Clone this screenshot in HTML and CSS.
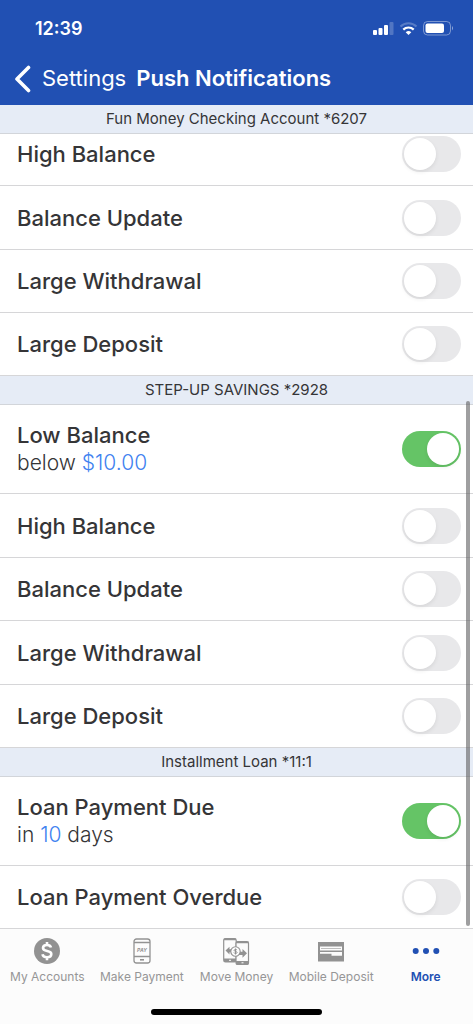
FILE: index.html
```html
<!DOCTYPE html>
<html lang="en">
<head>
<meta charset="utf-8">
<meta name="viewport" content="width=device-width, initial-scale=1">
<title>Push Notifications</title>
<link rel="stylesheet" href="styles.css">
</head>
<body>
<div class="app">
  <header class="top">
    <div class="status">
      <span class="time">12:39</span>
      <svg class="status-icons" width="82" height="16" viewBox="0 0 82 16" aria-hidden="true">
        <g fill="#fff">
          <rect x="1" y="10" width="4" height="5" rx="1"/>
          <rect x="6.500" y="8" width="4" height="7" rx="1"/>
          <rect x="12" y="5" width="4" height="10" rx="1"/>
          <rect x="17.500" y="2" width="4" height="13" rx="1" opacity=".22"/>
        </g>
        <g fill="none" stroke="#fff" stroke-width="2.200">
          <path d="M28.500 6.500a11.500 11.500 0 0 1 16 0" opacity=".25"/>
          <path d="M31.300 9.600a7.500 7.500 0 0 1 10.400 0"/>
        </g>
        <path d="M33.700 12.300a4 4 0 0 1 5.600 0L36.500 15z" fill="#fff"/>
        <rect x="51.500" y="1.500" width="27" height="13.500" rx="4" fill="none" stroke="#fff" opacity=".4"/>
        <rect x="53.500" y="3.500" width="18.500" height="9.500" rx="2" fill="#fff"/>
        <path d="M80 6q2 2 0 4.500z" fill="#fff" opacity=".5"/>
      </svg>
    </div>
    <div class="nav">
      <a class="back" href="#settings">
        <svg width="18" height="28" viewBox="0 0 18 28" aria-hidden="true"><path d="M14.500 2.500L3 14l11.500 11.500" fill="none" stroke="#fff" stroke-width="3.600" stroke-linecap="round" stroke-linejoin="round"/></svg>
        <span>Settings</span>
      </a>
      <h1 class="title">Push Notifications</h1>
    </div>
  </header>

  <main class="content">
    <section>
      <h2 class="group">Fun Money Checking Account *6207</h2>
      <ul class="rows scrolled">
        <li class="row"><label class="name" for="a1">High Balance</label><input class="switch" type="checkbox" role="switch" id="a1"></li>
        <li class="row"><label class="name" for="a2">Balance Update</label><input class="switch" type="checkbox" role="switch" id="a2"></li>
        <li class="row"><label class="name" for="a3">Large Withdrawal</label><input class="switch" type="checkbox" role="switch" id="a3"></li>
        <li class="row"><label class="name" for="a4">Large Deposit</label><input class="switch" type="checkbox" role="switch" id="a4"></li>
      </ul>
    </section>
    <section>
      <h2 class="group">STEP-UP SAVINGS *2928</h2>
      <ul class="rows">
        <li class="row tall"><div><label class="name" for="b1">Low Balance</label><p class="detail">below <a href="#amount">$10.00</a></p></div><input class="switch" type="checkbox" role="switch" id="b1" checked></li>
        <li class="row"><label class="name" for="b2">High Balance</label><input class="switch" type="checkbox" role="switch" id="b2"></li>
        <li class="row"><label class="name" for="b3">Balance Update</label><input class="switch" type="checkbox" role="switch" id="b3"></li>
        <li class="row"><label class="name" for="b4">Large Withdrawal</label><input class="switch" type="checkbox" role="switch" id="b4"></li>
        <li class="row"><label class="name" for="b5">Large Deposit</label><input class="switch" type="checkbox" role="switch" id="b5"></li>
      </ul>
    </section>
    <section>
      <h2 class="group">Installment Loan *11:1</h2>
      <ul class="rows">
        <li class="row tall"><div><label class="name" for="c1">Loan Payment Due</label><p class="detail">in <a href="#days">10</a> days</p></div><input class="switch" type="checkbox" role="switch" id="c1" checked></li>
        <li class="row"><label class="name" for="c2">Loan Payment Overdue</label><input class="switch" type="checkbox" role="switch" id="c2"></li>
      </ul>
    </section>
    <div class="scroll-thumb"></div>
  </main>

  <footer class="bottom">
    <nav class="tabs">
      <a class="tab" href="#accounts">
        <svg width="28" height="28" viewBox="0 0 28 28" aria-hidden="true"><circle cx="14" cy="14" r="13" fill="#929292"/><path d="M18 10.500C17.500 8.700 16 8 14 8c-2.300 0-4 1.100-4 3 0 4.300 8.300 1.700 8.300 6 0 2-1.900 3.200-4.300 3.200-2.500 0-4.200-1-4.500-3M14 5v3M14 20v3.200" fill="none" stroke="#fff" stroke-width="2.600"/></svg>
        <span>My Accounts</span>
      </a>
      <a class="tab" href="#payment">
        <svg width="28" height="28" viewBox="0 0 28 28" aria-hidden="true"><g fill="none" stroke="#929292" stroke-width="1.300"><rect x="6" y="2" width="16" height="24" rx="2.500"/><path d="M6 5.500h16M6 19.500h16"/><path d="M12 22.800h4" stroke-width="1.600"/></g><text x="14" y="14.500" text-anchor="middle" class="pay">PAY</text></svg>
        <span>Make Payment</span>
      </a>
      <a class="tab" href="#move">
        <svg width="28" height="28" viewBox="0 0 28 28" aria-hidden="true"><g fill="none" stroke="#929292" stroke-width="1.200"><rect x="1.700" y="1.500" width="12.500" height="23.500" rx="1.800"/><rect x="14" y="4.500" width="12.500" height="23" rx="1.800" fill="#fcfcfc"/></g><path d="M2 1.500h12v1.800H2zM2 21.500h12V25H2zM14 4.500h12.500v1.800H14zM14 24h12.500v3.500H14zM3.500 13.500l4-3.700v2.400h4v3h-4v2.400zM25 16.300L20.500 12v2.700h-4V18h4v2.700z" fill="#929292"/><circle cx="13.500" cy="14.500" r="4.700" fill="#fcfcfc" stroke="#929292" stroke-width="1.100"/><path d="M15 13.200c-.3-1-2.900-1-2.900.2 0 1.300 3 .7 3 2.100 0 1.300-3 1.300-3.200 0M13.500 11.500v6" fill="none" stroke="#929292"/><path d="M7 23.300h2M19.500 25.800h2" stroke="#fff"/></svg>
        <span>Move Money</span>
      </a>
      <a class="tab" href="#deposit">
        <svg width="28" height="28" viewBox="0 0 28 28" aria-hidden="true"><path d="M1 5h26v19.500H1z" fill="#929292"/><path d="M3 9.500h22v4H3zM3 15h22v3.700H14.500v-2H3z" fill="#fcfcfc"/><path d="M4 11.500h20" stroke="#929292" stroke-width=".6"/></svg>
        <span>Mobile Deposit</span>
      </a>
      <a class="tab active" href="#more" aria-current="page">
        <svg width="28" height="28" viewBox="0 0 28 28" aria-hidden="true"><g fill="#2150b3"><circle cx="3.700" cy="14" r="3"/><circle cx="14" cy="14" r="3"/><circle cx="24.300" cy="14" r="3"/></g></svg>
        <span>More</span>
      </a>
    </nav>
    <div class="home-bar"></div>
  </footer>
</div>
</body>
</html>
```
FILE: styles.css
```css
* { box-sizing: border-box; }
body, h1, h2, p, ul { margin: 0; padding: 0; }
body {
  background: #fcfcfc;
  color: #353537;
  font-family: Inter, "Liberation Sans", sans-serif;
}
a { color: inherit; text-decoration: none; }
.app { min-height: 100vh; display: flex; flex-direction: column; }

.top { background: #2150b3; color: #fff; padding: 16px 19px 12px 14px; }
.status { display: flex; justify-content: space-between; align-items: center; padding-left: 21px; height: 24px; }
.time { font-size: 18px; font-weight: 600; }
.status-icons { display: block; }
.nav { display: flex; align-items: center; gap: 10px; padding-top: 24px; }
.back { display: flex; align-items: center; gap: 10px; font-size: 22px; line-height: 29px; }
.title { font-size: 22px; line-height: 29px; font-weight: 600; }

.content { position: relative; background: #fff; }
.group {
  position: relative;
  z-index: 1;
  height: 29px;
  line-height: 28px;
  background: #e6ecf6;
  border-bottom: 1px solid #d2d5da;
  text-align: center;
  font-size: 15px;
  font-weight: 400;
}
.rows { list-style: none; }
.scrolled { margin-top: -11px; }
.row {
  display: flex;
  align-items: center;
  justify-content: space-between;
  min-height: 63px;
  padding: 0 12px 0 17px;
  border-bottom: 1px solid #d6d6d8;
}
.row:nth-child(even):not(:last-child) { min-height: 64px; }
.row.tall { min-height: 89px; }
.name { display: block; font-size: 22px; line-height: 28px; font-weight: 500; }
.detail { font-size: 21px; line-height: 28px; font-weight: 300; }
.detail a { color: #3f82f0; }

.switch {
  appearance: none;
  flex: none;
  display: flex;
  width: 59px;
  height: 36px;
  margin: 0;
  padding: 2px;
  border-radius: 18px;
  background: #e8e8ea;
}
.switch::before {
  content: "";
  width: 32px;
  height: 32px;
  border-radius: 50%;
  background: #fff;
  box-shadow: 0 2px 4px rgba(0, 0, 0, .08);
}
.switch:checked { background: #65c466; justify-content: flex-end; }

.scroll-thumb {
  position: absolute;
  z-index: 2;
  top: 296px;
  right: 3px;
  bottom: 3px;
  width: 4px;
  border-radius: 2px;
  background: rgba(90, 90, 92, .58);
}

.bottom { flex: 1; display: flex; flex-direction: column; justify-content: space-between; padding-bottom: 9px; }
.tabs { display: grid; grid-template-columns: repeat(5, 1fr); padding-top: 8px; }
.tab {
  display: flex;
  flex-direction: column;
  align-items: center;
  gap: 4px;
  color: #969697;
  font-size: 12px;
  line-height: 16px;
  font-weight: 400;
  white-space: nowrap;
}
.active { color: #2150b3; font-weight: 600; }
.pay { font-size: 5px; font-weight: 700; font-style: italic; fill: #929292; }
.home-bar { align-self: center; width: 36%; height: 6px; border-radius: 3px; background: #000; }
```
